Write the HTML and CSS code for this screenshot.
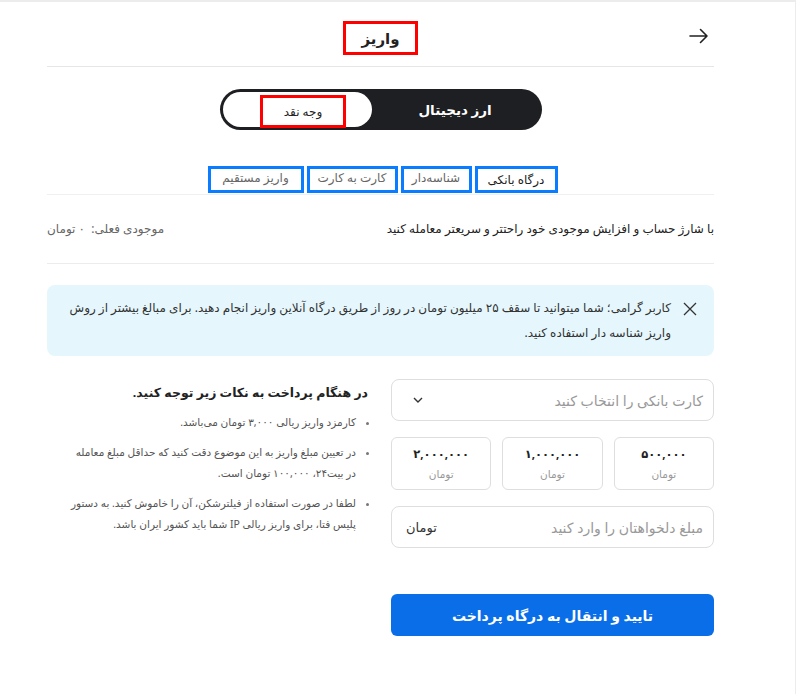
FILE: index.html
```html
<!DOCTYPE html>
<html lang="fa" dir="rtl">
<head>
<meta charset="utf-8">
<title>واریز</title>
<link rel="stylesheet" href="styles.css">
</head>
<body>
<div class="page">
  <div class="container">
    <header class="header">
      <div class="back">
        <svg width="20" height="16" viewBox="0 0 20 16"><path d="M1 8H18M11.5 1.5L18 8L11.5 14.5" fill="none" stroke="#222" stroke-width="1.6" stroke-linecap="round" stroke-linejoin="round"/></svg>
      </div>
      <h1 class="title">واریز</h1>
      <div></div>
    </header>

    <div class="toggle-wrap">
      <div class="toggle">
        <span class="toggle-opt">ارز دیجیتال</span>
        <span class="toggle-active"><span class="mark-red">وجه نقد</span></span>
      </div>
    </div>

    <nav class="tabs">
      <span class="tab active">درگاه بانکی</span>
      <span class="tab">شناسه‌دار</span>
      <span class="tab">کارت به کارت</span>
      <span class="tab">واریز مستقیم</span>
    </nav>

    <div class="balance">
      <span class="balance-desc">با شارژ حساب و افزایش موجودی خود راحتتر و سریعتر معامله کنید</span>
      <span class="balance-val">موجودی فعلی:&nbsp; ۰ تومان</span>
    </div>

    <div class="info">
      <svg class="info-x" width="14" height="14" viewBox="0 0 14 14"><path d="M1 1L13 13M13 1L1 13" stroke="#333" stroke-width="1.3" fill="none"/></svg>
      <p>کاربر گرامی؛ شما میتوانید تا سقف ۲۵ میلیون تومان در روز از طریق درگاه آنلاین واریز انجام دهید. برای مبالغ بیشتر از روش واریز شناسه دار استفاده کنید.</p>
    </div>

    <div class="cols">
      <div class="form">
        <div class="select">
          <span class="ph">کارت بانکی را انتخاب کنید</span>
          <svg width="10" height="6" viewBox="0 0 10 6"><path d="M1 1L5 5L9 1" fill="none" stroke="#333" stroke-width="1.4"/></svg>
        </div>
        <div class="amounts">
          <div class="amount"><b>۵۰۰,۰۰۰</b><span>تومان</span></div>
          <div class="amount"><b>۱,۰۰۰,۰۰۰</b><span>تومان</span></div>
          <div class="amount"><b>۲,۰۰۰,۰۰۰</b><span>تومان</span></div>
        </div>
        <div class="input">
          <span class="ph">مبلغ دلخواهتان را وارد کنید</span>
          <span class="unit">تومان</span>
        </div>
        <button class="submit">تایید و انتقال به درگاه پرداخت</button>
      </div>
      <div class="notes">
        <h3>در هنگام پرداخت به نکات زیر توجه کنید.</h3>
        <ul>
          <li>کارمزد واریز ریالی ۳,۰۰۰ تومان می‌باشد.</li>
          <li>در تعیین مبلغ واریز به این موضوع دقت کنید که حداقل مبلغ معامله در بیت۲۴، ۱۰۰,۰۰۰ تومان است.</li>
          <li>لطفا در صورت استفاده از فیلترشکن، آن را خاموش کنید. به دستور پلیس فتا، برای واریز ریالی IP شما باید کشور ایران باشد.</li>
        </ul>
      </div>
    </div>
  </div>
</div>
</body>
</html>
```
FILE: styles.css
```css
* { box-sizing: border-box; }
html, body { margin: 0; padding: 0; background: #fff; }
body {
  font-family: "Noto Sans", "DejaVu Sans", sans-serif;
  color: #222;
}
.page {
  width: 796px;
  height: 694px;
  border-top: 2px solid #ececec;
  border-right: 1px solid #ececec;
  direction: rtl;
}
.container {
  width: 667px;
  margin-right: 81px;
  margin-left: 48px;
}
.header {
  display: grid;
  grid-template-columns: 1fr auto 1fr;
  align-items: center;
  height: 65px;
  border-bottom: 1px solid #e6e6e6;
}
.back { display: flex; padding-right: 5px; padding-top: 3px; }
.title {
  margin: 0;
  font-size: 15px;
  font-weight: 700;
  border: 3px solid #f00;
  width: 75px;
  height: 34px;
  display: flex;
  align-items: center;
  justify-content: center;
  margin-top: 8px;
}
.toggle-wrap { display: flex; justify-content: center; padding-top: 22px; }
.toggle {
  display: flex;
  width: 322px;
  height: 41px;
  background: #1e1f22;
  border-radius: 21px;
  padding: 3px;
}
.toggle-opt {
  flex: 1;
  display: flex;
  align-items: center;
  justify-content: center;
  color: #fff;
  font-size: 13.5px;
  font-weight: 700;
}
.toggle-active {
  width: 149px;
  background: #fff;
  border-radius: 18px;
  display: flex;
  align-items: flex-end;
  justify-content: center;
  padding-left: 12px;
}
.mark-red {
  border: 3px solid #f00;
  width: 86px;
  height: 33px;
  display: flex;
  align-items: center;
  justify-content: center;
  font-size: 12px;
  color: #222;
  margin-bottom: -1px;
}
.tabs {
  display: flex;
  justify-content: center;
  gap: 3px;
  margin-top: 36px;
  padding-bottom: 1px;
  border-bottom: 1px solid #f0f0f0;
  padding-left: 4px;
}
.tab {
  border: 3px solid #0a7cff;
  height: 27px;
  padding: 0;
  display: flex;
  align-items: center;
  justify-content: center;
  white-space: nowrap;
  font-size: 12px;
  color: #666;
  padding-bottom: 4px;
}
.tab.active { color: #222; padding-bottom: 0; }
.tabs .tab:nth-child(1) { width: 83px; }
.tabs .tab:nth-child(2) { width: 71px; }
.tabs .tab:nth-child(3) { width: 91px; }
.tabs .tab:nth-child(4) { width: 96px; }
.balance {
  display: flex;
  justify-content: space-between;
  align-items: center;
  height: 69px;
  border-bottom: 1px solid #ececec;
  font-size: 12px;
  padding-bottom: 1px;
}
.balance-desc { color: #222; }
.balance-val { color: #666; }
.info {
  margin-top: 21px;
  background: #e5f7fd;
  border-radius: 8px;
  display: flex;
  align-items: flex-start;
  gap: 12px;
  padding: 10px 17px 11px 10px;
}
.info-x { flex: none; margin-top: 7px; }
.info p {
  margin: 0;
  font-size: 12px;
  line-height: 25px;
  color: #333;
}
.cols {
  display: flex;
  gap: 21px;
  margin-top: 23px;
}
.form { width: 323px; display: flex; flex-direction: column; }
.select, .input {
  height: 42px;
  border: 1px solid #dedede;
  border-radius: 8px;
  display: flex;
  align-items: center;
  justify-content: space-between;
  padding: 0 10px 0 21px;
}
.ph { color: #999; font-size: 14px; }
.unit { color: #333; font-size: 13px; }
.input { margin-top: 16px; padding-left: 14px; }
.amounts { display: flex; gap: 11px; margin-top: 16px; }
.amount {
  flex: 1;
  height: 53px;
  border: 1px solid #dedede;
  border-radius: 6px;
  display: flex;
  flex-direction: column;
  align-items: center;
  justify-content: center;
  gap: 6px;
}
.amount b { font-size: 11.5px; font-weight: 700; color: #222; }
.amount span { font-size: 10.5px; color: #999; }
.submit {
  margin-top: 46px;
  height: 42px;
  border: none;
  border-radius: 6px;
  background: #0a6ee8;
  color: #fff;
  font-family: inherit;
  font-size: 14px;
  font-weight: 700;
}
.notes { width: 323px; }
.notes h3 {
  margin: 5px 0 0;
  font-size: 12.5px;
  font-weight: 700;
  color: #222;
  padding-right: 2px;
}
.notes ul {
  margin: 11px 0 0;
  padding: 0 14px 0 20px;
  list-style: disc;
}
.notes li {
  font-size: 10.5px;
  line-height: 21px;
  color: #555;
  margin-bottom: 9px;
}
.notes li::marker { color: #777; font-size: 9px; }
```
